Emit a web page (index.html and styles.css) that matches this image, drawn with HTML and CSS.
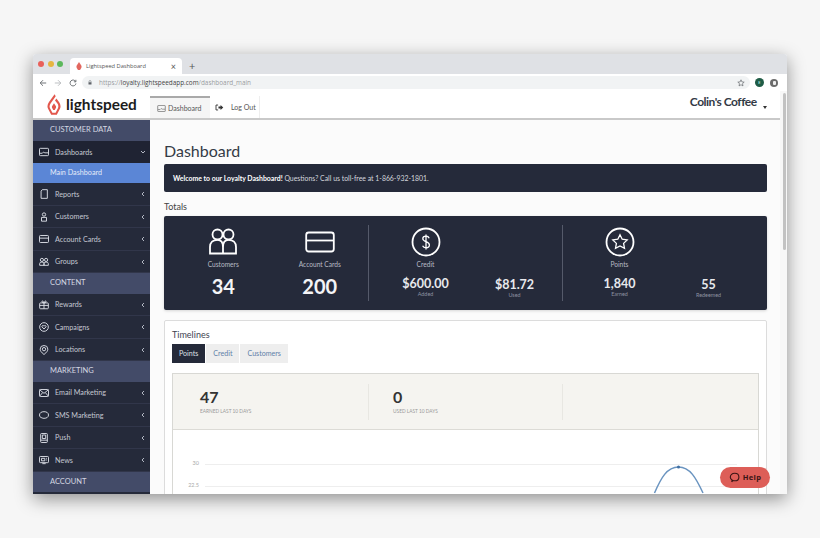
FILE: index.html
```html
<!DOCTYPE html>
<html><head>
  <meta charset="utf-8">
  <title>Lightspeed Dashboard</title>
  <link rel="stylesheet" href="styles.css">
</head>
<body>

<div class="window">

  <div class="tabstrip">
    <i class="dot red"></i><i class="dot yellow"></i><i class="dot green"></i>
    <div class="browser-tab">
      <svg class="favicon" viewBox="0 0 12 16"><path d="M6 0 L10.5 7 Q12 9.5 10.5 12 L8 16 H4 L1.5 12 Q0 9.5 1.5 7 Z" fill="#e2675f"/></svg>
      <span class="browser-tab-title">Lightspeed Dashboard</span>
      <span class="browser-tab-close">×</span>
    </div>
    <span class="newtab">+</span>
  </div>

  <div class="toolbar">
    <svg class="navicon" viewBox="0 0 10 10"><path d="M9 5H1.5M5 1.5L1.5 5L5 8.5" fill="none" stroke="#5f6368" stroke-width="1.1"/></svg>
    <svg class="navicon" viewBox="0 0 10 10"><path d="M1 5H8.5M5 1.5L8.5 5L5 8.5" fill="none" stroke="#b4b7bb" stroke-width="1.1"/></svg>
    <svg class="navicon" viewBox="0 0 10 10"><path d="M8.3 3.2A3.7 3.7 0 1 0 8.7 5.6M8.6 1V3.5H6.1" fill="none" stroke="#5f6368" stroke-width="1.1"/></svg>
    <div class="omnibox">
      <svg class="lock" viewBox="0 0 8 10"><path d="M2 4.5V3a2 2 0 0 1 4 0V4.5" fill="none" stroke="#5f6368"/><rect x="1" y="4.5" width="6" height="4.5" fill="#5f6368"/></svg>
      <span class="url"><span class="url-dim">https://</span>loyalty.lightspeedapp.com<span class="url-dim">/dashboard_main</span></span>
      <svg class="star" viewBox="0 0 12 12"><path d="M6 1.2L7.4 4.4L10.8 4.7L8.2 7L9 10.4L6 8.6L3 10.4L3.8 7L1.2 4.7L4.6 4.4Z" fill="none" stroke="#5f6368"/></svg>
    </div>
    <span class="avatar">E</span>
    <span class="ext"><i></i></span>
  </div>

  <div class="page">
    <div class="app">
      <header class="topbar">
        <div class="logo">
          <svg class="logo-mark" viewBox="0 0 14 21"><path d="M7.6 0.3 L2 8 Q-0.6 11.6 1.2 15 L4.2 20.7 H9.8 L12.8 15 Q14.6 11.6 12 8 L9.4 4.6 L8 6.6 L10.4 9.6 Q12 11.8 10.9 14.2 L8.6 18.8 H5.4 L3 14.2 Q1.9 11.8 3.6 9.4 L8.7 2.2 Z M7 9.3 L5.2 11.9 Q4.6 12.9 5.2 14 L6.2 16 H7.8 L8.8 14 Q9.4 12.9 8.8 11.9 Z" fill="#e2574c"/></svg>
          <span class="logo-text">lightspeed</span>
        </div>
        <nav class="topnav">
          <a class="topnav-item active">
            <svg class="topnav-icon" viewBox="0 0 12 10"><rect x="0.6" y="0.6" width="10.8" height="8.8" rx="1" fill="none" stroke="#555" stroke-width=".9"/><path d="M1 6.5H4L5.5 5L7 6H11" fill="none" stroke="#555" stroke-width=".8"/></svg>
            Dashboard
          </a>
          <a class="topnav-item logout">
            <svg class="topnav-icon" viewBox="0 0 12 10"><path d="M4 1.5H1V8.5H4" fill="none" stroke="#333" stroke-width="1.3"/><path d="M4.5 3.6H7.5V1.6L11.4 5L7.5 8.4V6.4H4.5Z" fill="#333"/></svg>
            Log Out
          </a>
        </nav>
        <div class="account">Colin's Coffee <i class="caret"></i></div>
      </header>

      <div class="columns">
        <aside class="sidebar">
          <div class="section">CUSTOMER DATA</div>
          <a class="row current"><svg class="row-icon" viewBox="0 0 12 10"><rect x="0.6" y="0.6" width="10.8" height="8.8" rx="1"/><path d="M1 6.5H4L5.5 5L7 6H11"/></svg>Dashboards<svg class="chev" viewBox="0 0 6 6"><path d="M1 2L3 4L5 2"/></svg></a>
          <a class="subrow">Main Dashboard</a>
          <a class="row"><svg class="row-icon" viewBox="0 0 12 12"><path d="M4 .8H10V11.2H2.5V2.5Z"/></svg>Reports<svg class="chev" viewBox="0 0 6 6"><path d="M4 1L2 3L4 5"/></svg></a>
          <a class="row"><svg class="row-icon" viewBox="0 0 12 12"><circle cx="6" cy="3" r="2"/><path d="M3 6.5H9V11H3Z"/></svg>Customers<svg class="chev" viewBox="0 0 6 6"><path d="M4 1L2 3L4 5"/></svg></a>
          <a class="row"><svg class="row-icon" viewBox="0 0 12 10"><rect x="0.6" y="0.8" width="10.8" height="8.4" rx="1"/><path d="M.6 4H11.4"/></svg>Account Cards<svg class="chev" viewBox="0 0 6 6"><path d="M4 1L2 3L4 5"/></svg></a>
          <a class="row"><svg class="row-icon" viewBox="0 0 12 12"><circle cx="3.5" cy="3.5" r="1.9"/><circle cx="8.5" cy="3.5" r="1.9"/><path d="M.8 10V8Q.8 6 3.5 6T6 8V10ZM6 10V8Q6 6 8.5 6T11.2 8V10Z"/></svg>Groups<svg class="chev" viewBox="0 0 6 6"><path d="M4 1L2 3L4 5"/></svg></a>
          <div class="section">CONTENT</div>
          <a class="row"><svg class="row-icon" viewBox="0 0 12 12"><rect x="0.8" y="3.5" width="10.4" height="7" rx="1"/><path d="M.8 6.5H11.2M6 3.5V10.5M6 3.5C3 3.5 3 1 4.3 1.2C5.3 1.4 6 3.5 6 3.5C6 3.5 6.7 1.4 7.7 1.2C9 1 9 3.5 6 3.5Z"/></svg>Rewards<svg class="chev" viewBox="0 0 6 6"><path d="M4 1L2 3L4 5"/></svg></a>
          <a class="row"><svg class="row-icon" viewBox="0 0 12 12"><circle cx="6" cy="6" r="5.2"/><path d="M6 8.4L3.6 5.9C2.9 4.5 5 3.5 6 5C7 3.5 9.1 4.5 8.4 5.9Z"/></svg>Campaigns<svg class="chev" viewBox="0 0 6 6"><path d="M4 1L2 3L4 5"/></svg></a>
          <a class="row"><svg class="row-icon" viewBox="0 0 12 12"><path d="M6 11.4C2.5 8.6 1.4 6.8 1.4 5A4.6 4.4 0 0 1 10.6 5C10.6 6.8 9.5 8.6 6 11.4Z"/><circle cx="6" cy="5" r="2"/></svg>Locations<svg class="chev" viewBox="0 0 6 6"><path d="M4 1L2 3L4 5"/></svg></a>
          <div class="section">MARKETING</div>
          <a class="row"><svg class="row-icon" viewBox="0 0 12 10"><rect x="0.6" y="0.8" width="10.8" height="8.4" rx="1"/><path d="M.8 1.2L6 5.4L11.2 1.2M.8 8.8L4.4 4.5M11.2 8.8L7.6 4.5"/></svg>Email Marketing<svg class="chev" viewBox="0 0 6 6"><path d="M4 1L2 3L4 5"/></svg></a>
          <a class="row"><svg class="row-icon" viewBox="0 0 12 10"><path d="M3.5 8.4C1.5 8 .6 6.8 .6 5C.6 2.5 2.8 1 6 1S11.4 2.5 11.4 5S9.2 9 6 9C5 9 4.2 8.8 3.5 8.4Z"/></svg>SMS Marketing<svg class="chev" viewBox="0 0 6 6"><path d="M4 1L2 3L4 5"/></svg></a>
          <a class="row"><svg class="row-icon" viewBox="0 0 12 12"><rect x="2" y=".6" width="8" height="10.8" rx="1"/><path d="M2 8.6H10M4 2.4H8V6.6H4Z"/></svg>Push<svg class="chev" viewBox="0 0 6 6"><path d="M4 1L2 3L4 5"/></svg></a>
          <a class="row"><svg class="row-icon" viewBox="0 0 12 10"><rect x="0.6" y="0.8" width="10.8" height="7.4" rx="1"/><path d="M3 3H7V6H3ZM8.5 3H9.5M8.5 5H9.5M4 9.4H8"/></svg>News<svg class="chev" viewBox="0 0 6 6"><path d="M4 1L2 3L4 5"/></svg></a>
          <div class="section">ACCOUNT</div>
        </aside>

        <main class="content">
          <h1 class="title">Dashboard</h1>
          <div class="banner"><b>Welcome to our Loyalty Dashboard!</b> Questions? Call us toll-free at 1-866-932-1801.</div>

          <h2 class="label">Totals</h2>
          <div class="totals">
            <div class="group first">
              <div class="stat">
                <svg class="stat-icon" viewBox="0 0 30 30"><circle cx="9.5" cy="7.5" r="5"/><circle cx="20.5" cy="7.5" r="5"/><path d="M2 26.5V20C2 15.5 5 12.8 9.5 12.8S15 15.5 15 20V26.5ZM15 26.5V20C15 15.5 16 12.8 20.5 12.8S28 15.5 28 20V26.5Z"/></svg>
                <div class="stat-name">Customers</div>
                <div class="stat-big">34</div>
              </div>
              <div class="stat">
                <svg class="stat-icon" viewBox="0 0 30 30"><rect x="1.2" y="5.5" width="27.6" height="19" rx="2.5"/><path d="M1.2 13.5H28.8"/></svg>
                <div class="stat-name">Account Cards</div>
                <div class="stat-big">200</div>
              </div>
            </div>
            <div class="group">
              <div class="stat">
                <svg class="stat-icon" viewBox="0 0 30 30"><circle cx="15" cy="15" r="13.5"/><path class="thin" d="M18.2 11.2C17.6 9.8 16.4 9.2 15 9.2C13 9.2 11.8 10.3 11.8 11.8C11.8 15 18.4 14.4 18.4 18C18.4 19.7 17 20.8 15 20.8C13.4 20.8 12.2 20.1 11.6 18.7M15 7.4V22.6"/></svg>
                <div class="stat-name">Credit</div>
                <div class="stat-mid">$600.00</div>
                <div class="stat-note">Added</div>
              </div>
              <div class="stat bottom">
                <div class="stat-mid">$81.72</div>
                <div class="stat-note">Used</div>
              </div>
            </div>
            <div class="group">
              <div class="stat">
                <svg class="stat-icon" viewBox="0 0 30 30"><circle cx="15" cy="15" r="13.5"/><path class="thin" d="M15 7.8L17.2 12.2L22.2 12.9L18.6 16.4L19.5 21.4L15 19L10.5 21.4L11.4 16.4L7.8 12.9L12.8 12.2Z"/></svg>
                <div class="stat-name">Points</div>
                <div class="stat-mid">1,840</div>
                <div class="stat-note">Earned</div>
              </div>
              <div class="stat bottom">
                <div class="stat-mid">55</div>
                <div class="stat-note">Redeemed</div>
              </div>
            </div>
          </div>

          <section class="timelines">
            <h2 class="label">Timelines</h2>
            <div class="tabs">
              <a class="tab on">Points</a>
              <a class="tab">Credit</a>
              <a class="tab">Customers</a>
            </div>
            <div class="chart-panel">
              <div class="summary">
                <div class="summary-cell"><div class="summary-num">47</div><div class="summary-cap">EARNED LAST 10 DAYS</div></div>
                <div class="summary-cell"><div class="summary-num">0</div><div class="summary-cap">USED LAST 10 DAYS</div></div>
                <div class="summary-cell"></div>
              </div>
              <div class="chart">
                <div class="chart-line"><span>30</span><i></i></div>
                <div class="chart-line"><span>22.5</span><i></i></div>
                <svg class="curve" viewBox="0 0 60 30"><path d="M5.5 29C12 14 18 3 29.5 3C41 3 47 14 54 29" fill="none" stroke="#6a94c0" stroke-width="1.5"/><circle cx="29.5" cy="3" r="1.5" fill="#3f6fa3"/></svg>
              </div>
            </div>
          </section>
        </main>
      </div>
    </div>

    <div class="scrollbar"><i></i></div>
  </div>

  <a class="help">
    <svg class="help-icon" viewBox="0 0 12 12"><path d="M3 10.8L3.4 8.8C2.2 8 1.4 7 1.4 5.6C1.4 3.2 3.4 1.4 6.2 1.4S10.8 3.2 10.8 5.6S8.8 9.6 6.2 9.6C5.4 9.6 4.8 9.5 4.2 9.3Z" fill="none" stroke="#3a1414" stroke-width="1.2"/></svg>
    Help
  </a>
</div>

</body></html>
```

FILE: styles.css
```css
html, body { margin: 0; padding: 0; height: 100%; overflow: hidden; }
body {
  background: #f6f6f6;
  font: 8px/1 Lato, "Open Sans", sans-serif;
  color: #333;
  padding: 54px 0 0 33px;
  box-sizing: border-box;
}

.window {
  position: relative;
  width: 754px;
  height: 440px;
  display: flex;
  flex-direction: column;
  background: #fff;
  border-radius: 3px 3px 0 0;
  box-shadow: 0 5px 18px rgba(0,0,0,.42);
}

/* browser chrome */
.tabstrip {
  height: 20px;
  flex: none;
  background: #dfe1e5;
  display: flex;
  align-items: center;
  padding-left: 5px;
  border-radius: 3px 3px 0 0;
}
.dot { width: 6px; height: 6px; border-radius: 50%; margin-right: 3.5px; }
.red { background: #e9605a; }
.yellow { background: #e6b541; }
.green { background: #5cb85c; }
.browser-tab {
  margin: 4px 0 0 3.5px;
  width: 112px;
  height: 16px;
  background: #fff;
  border-radius: 4px 4px 0 0;
  display: flex;
  align-items: center;
  padding: 0 6px;
  box-sizing: border-box;
}
.favicon { width: 6px; height: 8px; margin-right: 4px; }
.browser-tab-title { font: 5.7px "Open Sans", sans-serif; color: #555; flex: 1; }
.browser-tab-close { font-size: 9px; color: #555; }
.newtab { margin: 3px 0 0 7px; font: 11px "Open Sans", sans-serif; color: #555; }

.toolbar {
  height: 17px;
  flex: none;
  display: flex;
  align-items: center;
  padding-left: 6px;
  background: #fff;
}
.navicon { width: 8px; height: 8px; margin-right: 7px; }
.omnibox {
  flex: none;
  width: 668px;
  height: 13px;
  margin-left: -2px;
  background: #f1f3f4;
  border-radius: 7px;
  display: flex;
  align-items: center;
  padding: 0 5px 0 6px;
  box-sizing: border-box;
}
.lock { width: 4px; height: 5px; margin-right: 7px; }
.url { font: 6.4px "Open Sans", sans-serif; color: #444; flex: 1; }
.url-dim { color: #9a9da1; }
.star { width: 8px; height: 8px; }
.avatar {
  width: 9px; height: 9px;
  margin-left: 5px;
  border-radius: 50%;
  background: #1f5c46;
  color: #cfe;
  font-size: 4px;
  line-height: 9px;
  text-align: center;
}
.ext {
  width: 8px; height: 8px;
  margin-left: 6px;
  border-radius: 50%;
  background: #6b6b6b;
  display: flex;
  align-items: center;
  justify-content: center;
}
.ext i { width: 3px; height: 4px; background: #eee; border-radius: 1px; }

/* app */
.page { flex: 1; min-height: 0; overflow: hidden; display: flex; }
.app { flex: 1; min-width: 0; display: flex; flex-direction: column; }

.topbar {
  height: 29px;
  flex: none;
  box-sizing: border-box;
  border-bottom: 2px solid #c9c9c9;
  display: flex;
  background: #fff;
  padding-right: 13px;
}
.logo { width: 117px; flex: none; display: flex; align-items: center; padding-left: 14px; box-sizing: border-box; }
.logo-mark { width: 14px; height: 21px; margin-right: 5px; }
.logo-text { font: 700 15.4px/1 Lato, sans-serif; color: #1c1c1c; }

.topnav { display: flex; align-items: stretch; margin-top: 5px; font-size: 7px; color: #555; flex: 1; }
.topnav-item { display: flex; align-items: center; }
.topnav-item.active {
  width: 60px;
  box-sizing: border-box;
  padding-left: 7px;
  background: #f5f5f5;
  border-top: 2px solid #a9a9a9;
}
.topnav-item.logout { width: 50px; box-sizing: border-box; padding-left: 5px; border-right: 1px solid #eee; }
.topnav-icon { width: 9px; height: 7px; margin-right: 2px; }
.logout .topnav-icon { margin-right: 7px; }

.account { font: 700 12px/1 Lato, sans-serif; letter-spacing: -.5px; color: #333a45; padding-top: 5px; white-space: nowrap; }
.caret {
  display: inline-block;
  width: 0; height: 0;
  margin-left: 4px;
  vertical-align: -3px;
  border: 2.5px solid transparent;
  border-top: 3px solid #333;
  border-bottom: 0;
}

.columns { flex: 1; min-height: 0; display: flex; }

/* sidebar */
.sidebar { width: 117px; flex: none; background: #252a3a; overflow: hidden; }
.section {
  height: 20.5px;
  background: #434b68;
  color: #d5d8e2;
  font-size: 7.5px;
  line-height: 20px;
  padding-left: 17px;
}
.row {
  height: 22.5px;
  box-sizing: border-box;
  display: flex;
  align-items: center;
  padding: 1px 4px 0 6px;
  color: #c4c8d2;
  font-size: 7.2px;
  border-bottom: 1px solid #31364a;
}
.row.current { background: #1f2333; border-bottom: 0; }
.row-icon {
  width: 10px; height: 10px;
  margin-right: 6px;
  fill: none;
  stroke: #dfe2ea;
  stroke-width: 1.1;
}
.chev { width: 6px; height: 6px; margin-left: auto; fill: none; stroke: #c4c8d2; stroke-width: .9; }
.subrow {
  display: block;
  height: 20px;
  line-height: 20px;
  background: #5b86d6;
  color: #e4ebf8;
  font-size: 7.2px;
  padding-left: 17px;
}

/* main area */
.content {
  flex: 1;
  min-width: 0;
  overflow: hidden;
  background: #fbfbfb;
  padding: 0 13px 0 14px;
}
.title { margin: 23px 0 5px; font: 400 16px/16px Lato, sans-serif; color: #353b46; }
.banner {
  height: 28px;
  background: #252a3a;
  border-radius: 2px;
  color: #d6d8de;
  font-size: 6.9px;
  line-height: 28px;
  padding-left: 9px;
}
.banner b { color: #fff; }
.label { margin: 0; font: 400 9px/1 Lato, sans-serif; color: #444; }
.content > .label { margin: 10px 0 5px; }

.totals {
  height: 94px;
  display: grid;
  grid-template-columns: 204px 194px 1fr;
  background: #252a3a;
  border-radius: 2px;
  box-shadow: 0 1px 3px rgba(0,0,0,.15);
  color: #fff;
}
.group {
  display: grid;
  grid-template-columns: 89px 89px;
  align-content: start;
  margin: 9px 0;
  height: 76px;
  padding-left: 12px;
  border-left: 1px solid #555a6a;
  box-sizing: border-box;
}
.group.first { grid-template-columns: 96.5px 96.5px; padding-left: 11px; border-left: 0; }
.stat { text-align: center; display: flex; flex-direction: column; align-items: center; }
.stat.bottom { justify-content: flex-end; height: 76px; padding-bottom: 3px; box-sizing: border-box; }
.stat-icon { width: 30px; height: 30px; margin-top: 2px; fill: none; stroke: #fff; stroke-width: 1.8; }
.stat-icon .thin { stroke-width: 1.3; }
.stat-name { margin-top: 3px; font-size: 6.6px; color: #b8bbc5; line-height: 8px; }
.stat-big { margin-top: 8px; font: 700 20px/20px Lato, sans-serif; color: #f4f4f6; }
.stat-mid { margin-top: 9px; font: 700 12.5px/13px Lato, sans-serif; color: #e8e9ed; }
.stat-note { margin-top: 1px; font-size: 5.4px; line-height: 6px; color: #8e92a0; }

.timelines {
  margin-top: 10px;
  height: 300px;
  background: #fff;
  border: 1px solid #dcdcdc;
  border-radius: 2px;
  padding: 9px 7px;
}
.timelines .label { font-size: 9px; color: #3e4450; }
.tabs { display: flex; gap: 1px; margin-top: 5px; }
.tab {
  height: 19px;
  line-height: 19px;
  padding: 0 7px;
  background: #eee;
  color: #5f7fa8;
  font-size: 7.1px;
}
.tab.on { background: #252a3a; color: #dfe1e6; }

.chart-panel { margin-top: 10px; border: 1px solid #d8d8d4; height: 200px; }
.summary {
  height: 55px;
  display: grid;
  grid-template-columns: 196px 194px 1fr;
  background: #f5f4f0;
  border-bottom: 1px solid #dcdbd6;
}
.summary-cell { margin: 10px 0 9px; padding-left: 27px; border-right: 1px solid #e8e7e2; box-sizing: border-box; }
.summary-cell + .summary-cell { padding-left: 24px; }
.summary-cell:last-child { border-right: 0; }
.summary-num { margin-top: 4px; font: 700 16px/17px Lato, sans-serif; color: #333; }
.summary-cap { margin-top: 4px; font-size: 4.8px; color: #999; }

.chart { position: relative; padding-top: 23px; }
.chart-line { display: flex; align-items: center; height: 22px; }
.chart-line span { width: 26px; text-align: right; font-size: 5.5px; color: #aaa; }
.chart-line i { margin-left: 6px; width: 532px; height: 1px; background: #eee; }
.curve { position: absolute; left: 476px; top: 34px; width: 60px; height: 30px; }

.scrollbar { width: 7px; flex: none; background: #f7f7f7; }
.scrollbar i { display: block; width: 3px; height: 157px; margin: 2px 0 0 3px; background: #c2c2c2; border-radius: 2px; }

.help {
  position: absolute;
  left: 687px;
  top: 413px;
  width: 50px;
  height: 21px;
  border-radius: 11px;
  background: #dd5e58;
  color: #3a1414;
  font: 700 7.5px/21px "Open Sans", sans-serif;
  letter-spacing: .3px;
  display: flex;
  align-items: center;
  justify-content: center;
  gap: 3px;
}
.help-icon { width: 11px; height: 11px; }
```
